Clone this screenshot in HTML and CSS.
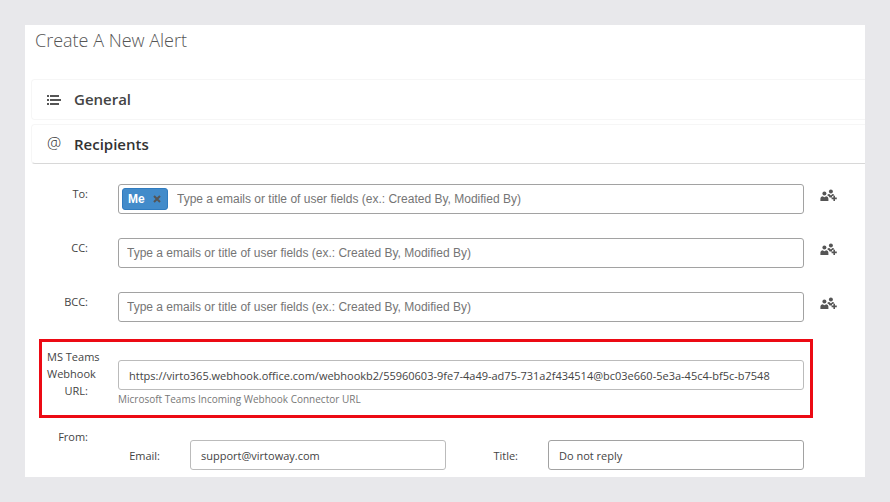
FILE: index.html
```html
<!DOCTYPE html>
<html lang="en">
<head>
<meta charset="utf-8">
<title>Create A New Alert</title>
<link rel="stylesheet" href="styles.css">
</head>
<body>
<svg class="sprite" aria-hidden="true">
  <symbol id="add-users" viewBox="0 0 17 13">
    <circle cx="4.4" cy="4.6" r="2"/>
    <path d="M.4 12V9.600Q.4 7.400 2.600 7.200L4.400 8.200 6.200 7.200Q8.400 7.400 8.400 9.600V12Z"/>
    <circle cx="10.900" cy="2.500" r="2"/>
    <path d="M7.200 6.200Q7.800 5.200 9.300 5.100L10.900 6.400 12.500 5.100Q13.900 5.200 14.300 6.200L12 7.300V8.500H9.600Q9.200 7.200 7.200 6.200Z"/>
    <path d="M13.400 6.800H15V8.600H16.800V10.200H15V12H13.400V10.200H11.600V8.600H13.400Z"/>
  </symbol>
</svg>
<main class="card">
  <h1 class="title">Create A New Alert</h1>

  <h2 class="section">
    <svg class="section-icon" viewBox="0 0 14 14" aria-hidden="true"><path d="M0 2h2v2H0zM0 6h2v2H0zM0 10h2v2H0zM3 2h9v2H3zM3 6h11v2H3zM3 10h9v2H3z"/></svg>
    General
  </h2>

  <h2 class="section section-open">
    <span class="section-icon at" aria-hidden="true">@</span>
    Recipients
  </h2>

  <form class="form">
    <div class="row">
      <div class="row-main">
        <label class="label" for="to">To:</label>
        <div class="field tags">
          <span class="tag">Me <button class="remove" type="button" aria-label="Remove Me"><svg viewBox="0 0 8 8"><path d="M1 1l6 6M7 1l-6 6"/></svg></button></span>
          <input class="tag-input" id="to" type="text" placeholder="Type a emails or title of user fields (ex.: Created By, Modified By)">
        </div>
      </div>
      <button class="add" type="button" aria-label="Add users to To"><svg><use href="#add-users"/></svg></button>
    </div>
    <div class="row">
      <div class="row-main">
        <label class="label" for="cc">CC:</label>
        <div class="field tags">
          <input class="tag-input" id="cc" type="text" placeholder="Type a emails or title of user fields (ex.: Created By, Modified By)">
        </div>
      </div>
      <button class="add" type="button" aria-label="Add users to CC"><svg><use href="#add-users"/></svg></button>
    </div>
    <div class="row">
      <div class="row-main">
        <label class="label" for="bcc">BCC:</label>
        <div class="field tags">
          <input class="tag-input" id="bcc" type="text" placeholder="Type a emails or title of user fields (ex.: Created By, Modified By)">
        </div>
      </div>
      <button class="add" type="button" aria-label="Add users to BCC"><svg><use href="#add-users"/></svg></button>
    </div>
    <div class="row">
      <div class="row-main highlight">
        <label class="label" for="webhook">MS&nbsp;Teams Webhook URL:</label>
        <div>
          <input class="field text light" id="webhook" type="text" value="https://virto365.webhook.office.com/webhookb2/55960603-9fe7-4a49-ad75-731a2f434514@bc03e660-5e3a-45c4-bf5c-b7548">
          <p class="help">Microsoft Teams Incoming Webhook Connector URL</p>
        </div>
      </div>
    </div>
    <div class="row">
      <div class="row-main from">
        <span class="label">From:</span>
        <div class="pair">
          <label class="sub-label" for="email">Email:</label>
          <input class="field text light" id="email" type="text" value="support@virtoway.com">
          <label class="sub-label" for="name">Title:</label>
          <input class="field text" id="name" type="text" value="Do not reply">
        </div>
      </div>
    </div>
  </form>
</main>
</body>
</html>
```
FILE: styles.css
```css
* { box-sizing: border-box; }
body {
  margin: 0;
  padding: 25px;
  background: #e8e8eb;
  color: #444;
  font: 11px/17px "Open Sans", "Noto Sans", sans-serif;
}
button { padding: 0; border: 0; background: none; }
.sprite { display: none; }
.card { padding-bottom: 7px; background: #fff; }
.title {
  margin: 0;
  padding: 3px 10px 26px;
  color: #555;
  font-size: 18px;
  font-weight: 300;
  line-height: 25px;
}
.section {
  display: flex;
  align-items: center;
  gap: 13px;
  height: 41px;
  margin: 0 0 4px 6px;
  padding-left: 15px;
  border: 1px solid #f6f6f6;
  border-right: 0;
  border-radius: 4px 0 0 4px;
  color: #444;
  font-size: 15px;
  font-weight: 600;
}
.section-open { height: 40px; margin-bottom: 0; border-bottom-color: #d8d8d8; color: #333; }
.section-icon { width: 14px; height: 14px; fill: #555; }
.at { font-size: 16px; font-weight: 300; line-height: 12px; }
.form { padding: 20px 0 0 14px; }
.row { display: grid; grid-template-columns: 1fr 52px; align-items: start; }
.row-main {
  display: grid;
  grid-template-columns: 41px minmax(0, 1fr);
  gap: 30px;
  min-height: 54px;
  padding: 0 9px 0 8px;
}
.label { padding-top: 1px; text-align: right; }
.field {
  width: 100%;
  height: 30px;
  border: 1px solid #a2a2a2;
  border-radius: 3px;
  background: #fff;
  color: #444;
}
.light { border-color: #bbb; }
.tags { display: flex; align-items: center; padding: 0 3px; }
.tag {
  display: flex;
  align-items: center;
  justify-content: space-between;
  width: 46px;
  height: 22px;
  margin-right: 4px;
  padding: 0 6px 0 5px;
  border: 1px solid #2f7bbf;
  border-radius: 3px;
  background: #428bca;
  color: #fff;
  font: 700 12px/20px "Liberation Sans", sans-serif;
}
.remove { display: flex; }
.remove svg { width: 8px; height: 8px; stroke: #555; stroke-width: 2; }
.tag-input {
  flex: 1;
  min-width: 0;
  padding: 0 5px;
  border: 0;
  background: none;
  font: 12px/16px "Liberation Sans", sans-serif;
}
.tag-input::placeholder { color: #757575; }
.text { padding: 0 10px; font: 11px/17px "Open Sans", "Noto Sans", sans-serif; }
.add { padding: 5px 7px; }
.add svg { display: block; width: 17px; height: 13px; fill: #555; }
.highlight {
  min-height: 79px;
  margin-top: -7px;
  padding: 5px 6px 0 5px;
  border: 3px solid #ec0a14;
}
.highlight .field { margin-top: 13px; }
.help { margin: 1px 0 0; color: #777; font-size: 10px; }
.from { min-height: 0; padding-top: 9px; }
.pair {
  display: grid;
  grid-template-columns: 72px minmax(0, 1fr) 102px minmax(0, 1fr);
  align-items: center;
  padding-top: 13px;
}
.sub-label { padding-right: 30px; text-align: right; }
```
